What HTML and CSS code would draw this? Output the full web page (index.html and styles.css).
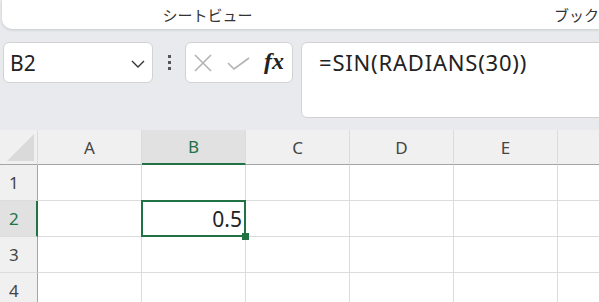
FILE: index.html
```html
<!DOCTYPE html>
<html lang="ja">
<head>
    <meta charset="UTF-8">
    <meta name="viewport" content="width=device-width, initial-scale=1.0">
    <title>Excel - SIN</title>
    <link rel="stylesheet" href="styles.css">
</head>
<body>

    <div class="ribbon-tabs">
        <div class="tab tab-sheet">シートビュー</div>
        <div class="tab-sep"></div>
        <div class="tab tab-book">ブックの表示</div>
    </div>

    <div class="formula-bar">
        <div class="name-box">
            <span>B2</span>
            <svg class="chevron" width="14" height="8" viewBox="0 0 14 8">
                <polyline points="1,1 7,7 13,1" fill="none" stroke="#333" stroke-width="1.4"/>
            </svg>
        </div>
        <div class="dots"><i></i><i></i><i></i></div>
        <div class="fx-box">
            <svg width="18" height="18" viewBox="0 0 18 18">
                <path d="M1 1 L17 17 M17 1 L1 17" stroke="#b3b3b3" stroke-width="1.6" fill="none"/>
            </svg>
            <svg width="23" height="13" viewBox="0 0 23 13">
                <polyline points="1,6 7,12 22,1" stroke="#b3b3b3" stroke-width="1.6" fill="none"/>
            </svg>
            <span class="fx">fx</span>
        </div>
        <div class="formula-input">=SIN(RADIANS(30))</div>
    </div>

    <div class="sheet">
        <div class="hd corner"><div class="tri"></div></div>
        <div class="hd col">A</div>
        <div class="hd col sel">B</div>
        <div class="hd col">C</div>
        <div class="hd col">D</div>
        <div class="hd col">E</div>
        <div class="hd col"></div>

        <div class="hd row">1</div>
        <div class="cell"></div><div class="cell"></div><div class="cell"></div><div class="cell"></div><div class="cell"></div><div class="cell"></div>

        <div class="hd row sel">2</div>
        <div class="cell"></div>
        <div class="cell num active">0.5<span class="handle"></span></div>
        <div class="cell"></div><div class="cell"></div><div class="cell"></div><div class="cell"></div>

        <div class="hd row">3</div>
        <div class="cell"></div><div class="cell"></div><div class="cell"></div><div class="cell"></div><div class="cell"></div><div class="cell"></div>

        <div class="hd row">4</div>
        <div class="cell"></div><div class="cell"></div><div class="cell"></div><div class="cell"></div><div class="cell"></div><div class="cell"></div>
    </div>

</body>
</html>
```

FILE: styles.css
```css
html, body {
    margin: 0;
    padding: 0;
    height: 302px;
    overflow: hidden;
}
body {
    font-family: "Noto Sans", "Noto Sans CJK JP", sans-serif;
    background-color: #e8eaed;
    color: #333;
}

/* ribbon tabs */
.ribbon-tabs {
    display: flex;
    height: 29px;
    margin-left: 2px;
    background: #ffffff;
    border-bottom-left-radius: 10px;
    box-shadow: 0 1px 3px rgba(0, 0, 0, 0.15);
    overflow: hidden;
}
.tab {
    flex: none;
    line-height: 29px;
    font-size: 15px;
    text-align: center;
    color: #333;
    white-space: nowrap;
    font-family: "Noto Sans CJK JP", sans-serif;
}
.tab-sheet {
    width: 411px;
}
.tab-sep {
    width: 1px;
    height: 20px;
    background: #d4d4d4;
}
.tab-book {
    width: 372px;
}

/* formula bar */
.formula-bar {
    display: flex;
    align-items: flex-start;
    margin-top: 13px;
    margin-left: 3px;
    margin-right: -20px;
    height: 76px;
}
.name-box,
.fx-box,
.formula-input {
    box-sizing: border-box;
    background: #ffffff;
    border: 1px solid #d2d2d2;
    border-radius: 6px;
}
.name-box {
    width: 150px;
    height: 41px;
    display: flex;
    align-items: center;
    justify-content: space-between;
    padding: 0 7px 0 6px;
    font-size: 21px;
    color: #222;
}
.chevron {
    margin-top: 2px;
}
.dots {
    width: 32px;
    height: 41px;
    display: flex;
    flex-direction: column;
    align-items: center;
    justify-content: center;
    gap: 3px;
}
.dots i {
    display: block;
    width: 3px;
    height: 3px;
    background: #555;
}
.fx-box {
    width: 108px;
    height: 41px;
    display: flex;
    align-items: center;
    padding-left: 8px;
}
.fx-box svg:nth-child(2) {
    margin-left: 15px;
    margin-top: 1px;
}
.fx {
    margin-left: 14px;
    font-family: "Liberation Serif", "DejaVu Serif", serif;
    font-style: italic;
    font-weight: bold;
    font-size: 24px;
    color: #222;
    margin-top: -3px;
}
.formula-input {
    flex: 1;
    height: 76px;
    margin-left: 8px;
    padding: 4px 0 0 17px;
    font-size: 22px;
    letter-spacing: 0.8px;
    color: #222;
}

/* sheet grid */
.sheet {
    margin-top: 12px;
    display: grid;
    grid-template-columns: 38px repeat(6, 104px);
    grid-template-rows: 35px repeat(4, 36px);
    background: #ffffff;
}
.hd {
    box-sizing: border-box;
    background: #f0f0f0;
    color: #444;
    font-size: 17px;
    display: flex;
    align-items: center;
}
.col {
    justify-content: center;
    border-right: 1px solid #dcdcdc;
    border-bottom: 1px solid #a5a5a5;
}
.row {
    padding-left: 9px;
    border-right: 1px solid #a5a5a5;
    border-bottom: 1px solid #dcdcdc;
}
.corner {
    position: relative;
    border-right: 1px solid #dcdcdc;
    border-bottom: 1px solid #a5a5a5;
}
.tri {
    position: absolute;
    right: 3px;
    bottom: 3px;
    width: 27px;
    height: 27px;
    background: #dadada;
    clip-path: polygon(100% 0, 100% 100%, 0 100%);
}
.hd.sel {
    background: #e1e1e1;
    color: #217346;
}
.col.sel {
    border-bottom: 2px solid #217346;
}
.row.sel {
    border-right: 2px solid #217346;
}
.cell {
    box-sizing: border-box;
    border-right: 1px solid #dcdcdc;
    border-bottom: 1px solid #dcdcdc;
}
.num {
    display: flex;
    align-items: center;
    justify-content: flex-end;
    padding-right: 3px;
    font-size: 21px;
    color: #222;
}
.active {
    position: relative;
}
.active::after {
    content: '';
    position: absolute;
    top: -1px;
    left: -1px;
    right: -1px;
    bottom: -1px;
    border: 2px solid #217346;
}
.handle {
    position: absolute;
    right: -4px;
    bottom: -4px;
    width: 7px;
    height: 7px;
    background: #217346;
    z-index: 1;
}
```
